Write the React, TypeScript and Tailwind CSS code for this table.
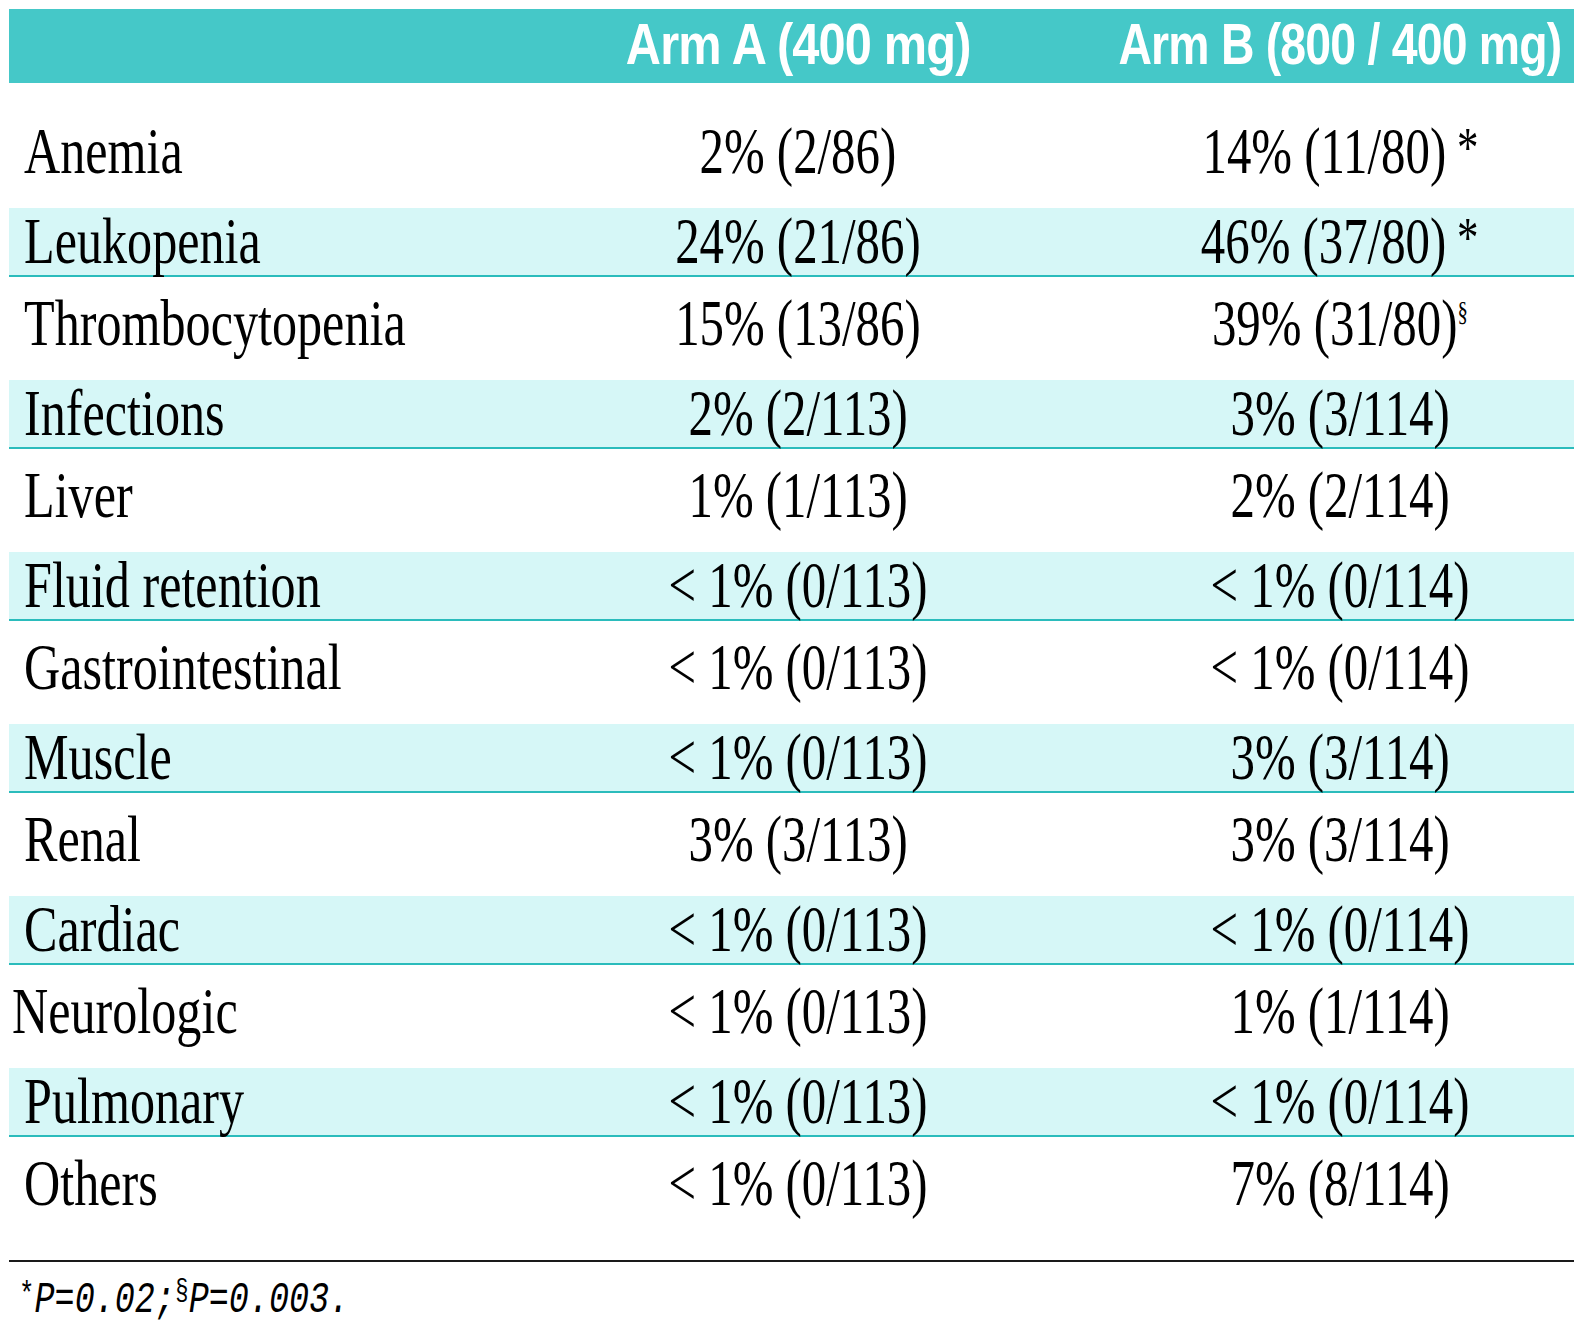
import React from 'react';

type Row = {
  label: string;
  armA: string;
  armB: string;
  mark?: '*' | '§';
  shaded: boolean;
  labelClass?: string;
};

const rows: Row[] = [
  { label: 'Anemia', armA: '2% (2/86)', armB: '14% (11/80)', mark: '*', shaded: false },
  { label: 'Leukopenia', armA: '24% (21/86)', armB: '46% (37/80)', mark: '*', shaded: true },
  { label: 'Thrombocytopenia', armA: '15% (13/86)', armB: '39% (31/80)', mark: '§', shaded: false },
  { label: 'Infections', armA: '2% (2/113)', armB: '3% (3/114)', shaded: true },
  { label: 'Liver', armA: '1% (1/113)', armB: '2% (2/114)', shaded: false },
  { label: 'Fluid retention', armA: '< 1% (0/113)', armB: '< 1% (0/114)', shaded: true },
  { label: 'Gastrointestinal', armA: '< 1% (0/113)', armB: '< 1% (0/114)', shaded: false },
  { label: 'Muscle', armA: '< 1% (0/113)', armB: '3% (3/114)', shaded: true },
  { label: 'Renal', armA: '3% (3/113)', armB: '3% (3/114)', shaded: false },
  { label: 'Cardiac', armA: '< 1% (0/113)', armB: '< 1% (0/114)', shaded: true },
  { label: 'Neurologic', armA: '< 1% (0/113)', armB: '1% (1/114)', shaded: false, labelClass: 'pl-[3px]' },
  { label: 'Pulmonary', armA: '< 1% (0/113)', armB: '< 1% (0/114)', shaded: true },
  { label: 'Others', armA: '< 1% (0/113)', armB: '7% (8/114)', shaded: false },
];

const serif = "font-['Liberation_Serif',_'Times_New_Roman',_serif]";

export default function App() {
  return (
    <div className="h-[1336px] w-[1584px] bg-white pl-[9px] pr-[10px] pt-[9px] text-black">
      <div className="grid h-[74px] grid-cols-[521px_536px_minmax(0,1fr)] items-center bg-[#45c8c8] pb-[4px] font-['Liberation_Sans',_Arial,_sans-serif] text-[58px] font-bold leading-none text-white">
        <div />
        <div className="flex justify-center">
          <span className="inline-block shrink-0 origin-center scale-x-[0.84] whitespace-pre tracking-[-1px]">Arm A (400 mg)</span>
        </div>
        <div className="flex justify-center pl-[40px]">
          <span className="inline-block shrink-0 origin-center scale-x-[0.8] whitespace-pre tracking-[-1px]">Arm B (800 / 400 mg)</span>
        </div>
      </div>

      <div className={`pt-[22px] ${serif} text-[66px] leading-none`}>
        {rows.map((row) => (
          <div
            key={row.label}
            className={`grid grid-cols-[521px_536px_minmax(0,1fr)] items-center pb-[12px] ${
              row.shaded ? 'h-[69px] border-b-2 border-[#2bbcbc] bg-[#d6f7f7]' : 'h-[103px]'
            }`}
          >
            <div className={row.labelClass ?? 'pl-[15px]'}>
              <span className="inline-block origin-left scale-x-[0.76] whitespace-pre">{row.label}</span>
            </div>
            <div className="flex justify-center">
              <span className="inline-block origin-center scale-x-[0.74] whitespace-pre">{row.armA}</span>
            </div>
            <div className="flex justify-center pl-[40px]">
              <span className="inline-block origin-center scale-x-[0.74] whitespace-pre">
                {row.armB}
                {row.mark === '*' ? <span className="relative -top-[6px] text-[58px]"> *</span> : null}
                {row.mark === '§' ? <span className="relative -top-[24px] text-[28px]">§</span> : null}
              </span>
            </div>
          </div>
        ))}
      </div>

      <div className="mt-[20px] h-[2px] bg-[#1a1a1a]" />

      <div className="pl-[10px] pt-[16px] font-['Liberation_Mono',_'Courier_New',_monospace] text-[44px] italic leading-none">
        <span className="inline-block origin-left scale-x-[0.76] whitespace-pre">
          <span className="relative -top-[8px] text-[34px] not-italic">*</span>P=0.02;
          <span className="relative -top-[12px] text-[30px] not-italic">§</span>P=0.003.
        </span>
      </div>
    </div>
  );
}
